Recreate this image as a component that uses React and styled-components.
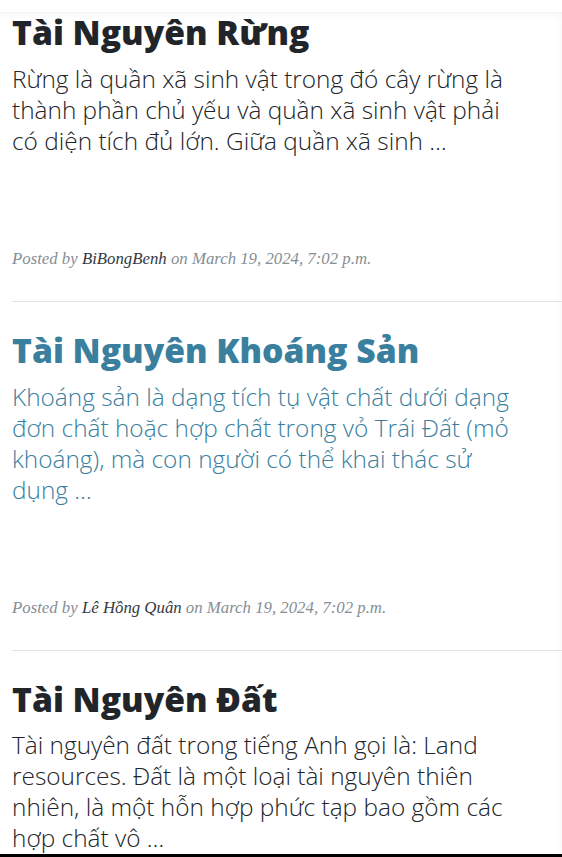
import React from "react";
import styled, { createGlobalStyle } from "styled-components";

const GlobalStyle = createGlobalStyle`
  html, body {
    margin: 0;
    padding: 0;
    background: #fff;
  }
  body {
    font-family: "Open Sans", "Noto Sans", sans-serif;
    color: #212529;
    overflow: hidden;
  }
`;

const Page = styled.main`
  min-height: 857px;
  padding-left: 12px;
  box-shadow: inset 0 9px 9px -9px rgba(0, 0, 0, 0.08),
    inset -8px 0 8px -8px rgba(0, 0, 0, 0.04);
`;

const Preview = styled.article`
  &:first-child h2 {
    margin-top: 12px;
  }
`;

const PostLink = styled.a`
  display: block;
  text-decoration: none;
  color: ${(p) => (p.$hover ? "#3a809e" : "#212529")};
`;

const PostTitle = styled.h2`
  font-size: 33.7px;
  font-weight: 800;
  line-height: 40.8px;
  margin: 28px 0 10px;
`;

const PostSubtitle = styled.h3`
  font-size: 24.4px;
  font-weight: 300;
  line-height: 31px;
  margin: 0 0 10px;
  max-width: 512px;
`;

const PostMeta = styled.p`
  font-family: "Liberation Serif", "DejaVu Serif", serif;
  font-style: italic;
  font-size: 16.8px;
  line-height: 27px;
  color: #868e96;
  margin: 89px 0 0;

  a {
    color: #343a40;
    text-decoration: none;
  }
`;

const Divider = styled.hr`
  border: 0;
  border-top: 1px solid #e2e2e2;
  margin: 29px 0 0;
`;

const BottomEdge = styled.div`
  position: fixed;
  left: 0;
  right: 0;
  bottom: 0;
  height: 3px;
  background: #000;
`;

const posts = [
  {
    title: "Tài Nguyên Rừng",
    excerpt:
      "Rừng là quần xã sinh vật trong đó cây rừng là thành phần chủ yếu và quần xã sinh vật phải có diện tích đủ lớn. Giữa quần xã sinh …",
    author: "BiBongBenh",
    date: "March 19, 2024, 7:02 p.m.",
  },
  {
    title: "Tài Nguyên Khoáng Sản",
    excerpt:
      "Khoáng sản là dạng tích tụ vật chất dưới dạng đơn chất hoặc hợp chất trong vỏ Trái Đất (mỏ khoáng), mà con người có thể khai thác sử dụng …",
    author: "Lê Hồng Quân",
    date: "March 19, 2024, 7:02 p.m.",
    hover: true,
  },
  {
    title: "Tài Nguyên Đất",
    excerpt:
      "Tài nguyên đất trong tiếng Anh gọi là: Land resources. Đất là một loại tài nguyên thiên nhiên, là một hỗn hợp phức tạp bao gồm các hợp chất vô …",
    author: "Admin",
    date: "March 19, 2024, 7:02 p.m.",
  },
];

export default function App() {
  return (
    <>
      <GlobalStyle />
      <Page>
        {posts.map((post, i) => (
          <Preview key={i}>
            <PostLink href="#" $hover={post.hover}>
              <PostTitle>{post.title}</PostTitle>
              <PostSubtitle>{post.excerpt}</PostSubtitle>
            </PostLink>
            <PostMeta>
              Posted by <a href="#">{post.author}</a> on {post.date}
            </PostMeta>
            <Divider />
          </Preview>
        ))}
      </Page>
      <BottomEdge />
    </>
  );
}
